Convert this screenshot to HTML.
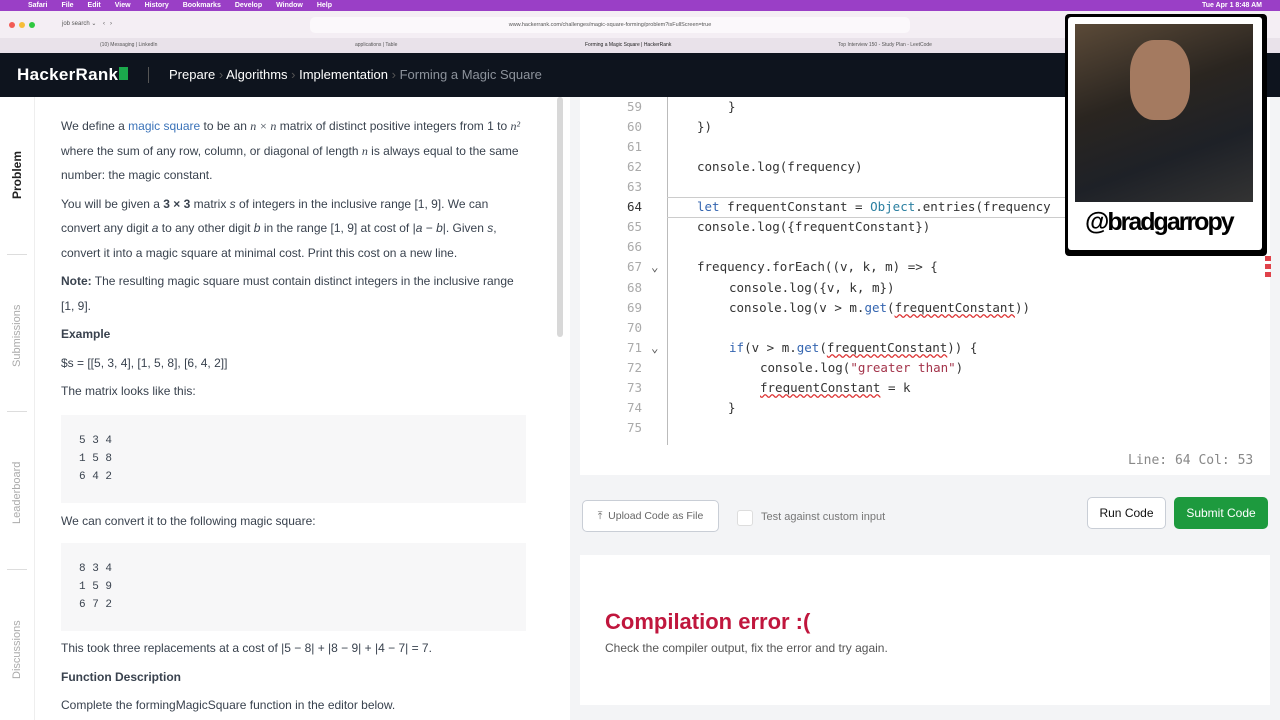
<!DOCTYPE html>
<html><head><meta charset="utf-8"><style>
*{margin:0;padding:0;box-sizing:border-box}
body{width:1280px;height:720px;overflow:hidden;font-family:"Liberation Sans",sans-serif;background:#fff;position:relative}
.abs{position:absolute}
.menu{top:0;left:0;width:1280px;height:11px;background:#9a3fc6;color:#fff;font-size:7px;font-weight:bold;line-height:11px}
.menu span{margin-left:14px}
.tool{top:11px;left:0;width:1280px;height:27px;background:#f4eef4}
.tabs{top:38px;left:0;width:1280px;height:15px;background:#e9e2ea;font-size:5px;color:#555;line-height:15px}
.hdr{top:53px;left:0;width:1280px;height:44px;background:#0e141e;color:#fff}
.side{top:97px;left:0;width:35px;height:623px;background:#fff;border-right:1px solid #eee}
.vt{position:absolute;transform:rotate(-90deg);transform-origin:left top;font-size:11px;color:#aaa;white-space:nowrap}
.content{top:97px;left:35px;width:520px;color:#39424e;font-size:12px;line-height:24.5px}
.content p{margin-left:26px;width:462px}
.pre{margin-left:26px;width:465px;background:#f7f7f8;font-family:"Liberation Mono",monospace;font-size:11px;line-height:18px;padding:17px 18px;color:#39424e}
.right{top:97px;left:570px;width:710px;height:623px;background:#f3f4f6}
.editor{top:97px;left:580px;width:690px;height:378px;background:#fff}
.code{font-family:"DejaVu Sans Mono","Liberation Mono",monospace;font-size:12.5px;color:#333}
.ln{position:absolute;left:592px;width:50px;text-align:right;color:#aaa}
.cl{position:absolute;white-space:pre}
.sq{text-decoration:underline wavy #d33;text-decoration-skip-ink:none}
.btn{border:1px solid #c9ced6;border-radius:5px;background:#fff;font-size:12px;text-align:center}
</style></head><body>
<div class="abs menu"><span style="margin-left:28px">Safari</span><span>File</span><span>Edit</span><span>View</span><span>History</span><span>Bookmarks</span><span>Develop</span><span>Window</span><span>Help</span><span style="position:absolute;right:18px">Tue Apr 1 8:48 AM</span></div>
<div class="abs tool">
 <div class="abs" style="left:9px;top:11px;width:6px;height:6px;border-radius:50%;background:#f25b55"></div>
 <div class="abs" style="left:19px;top:11px;width:6px;height:6px;border-radius:50%;background:#f6bd3a"></div>
 <div class="abs" style="left:29px;top:11px;width:6px;height:6px;border-radius:50%;background:#2fc840"></div>
 <div class="abs" style="left:62px;top:9px;font-size:6px;color:#555">job search ⌄ &nbsp;&nbsp; ‹ &nbsp; ›</div>
 <div class="abs" style="left:310px;top:6px;width:600px;height:16px;background:#fbf8fb;border-radius:5px;font-size:5.5px;color:#555;text-align:center;line-height:16px">www.hackerrank.com/challenges/magic-square-forming/problem?isFullScreen=true</div>
</div>
<div class="abs tabs"><span style="position:absolute;left:100px">(10) Messaging | LinkedIn</span><span style="position:absolute;left:355px">applications | Table</span><span style="position:absolute;left:585px;color:#222">Forming a Magic Square | HackerRank</span><span style="position:absolute;left:838px">Top Interview 150 - Study Plan - LeetCode</span></div>
<div class="abs hdr">
 <div class="abs" style="left:17px;top:12px;font-size:17px;font-weight:bold;letter-spacing:.3px">HackerRank<span style="display:inline-block;width:9px;height:13px;background:#1ba94c;margin-left:1px"></span></div>
 <div class="abs" style="left:148px;top:14px;width:1px;height:16px;background:#555"></div>
 <div class="abs" style="left:169px;top:14px;font-size:13px">Prepare <span style="color:#555">›</span> Algorithms <span style="color:#555">›</span> Implementation <span style="color:#555">›</span> <span style="color:#8c929b">Forming a Magic Square</span></div>
</div>
<div class="abs side">
 <div class="vt" style="left:10px;top:102px;color:#222;font-weight:bold;font-size:12px">Problem</div>
 <div class="vt" style="left:11px;top:270px">Submissions</div>
 <div class="vt" style="left:11px;top:427px">Leaderboard</div>
 <div class="vt" style="left:11px;top:582px">Discussions</div>
 <div class="abs" style="left:7px;top:157px;width:20px;height:1px;background:#ddd"></div>
 <div class="abs" style="left:7px;top:314px;width:20px;height:1px;background:#ddd"></div>
 <div class="abs" style="left:7px;top:472px;width:20px;height:1px;background:#ddd"></div>
</div>
<div class="abs content">
 <p style="margin-top:17px">We define a <span style="color:#3b73b9">magic square</span> to be an <i style="font-family:'Liberation Serif'">n × n</i> matrix of distinct positive integers from 1 to <i style="font-family:'Liberation Serif'">n²</i> where the sum of any row, column, or diagonal of length <i style="font-family:'Liberation Serif'">n</i> is always equal to the same number: the magic constant.</p>
 <p style="margin-top:4px">You will be given a <b>3 × 3</b> matrix <i>s</i> of integers in the inclusive range [1, 9]. We can convert any digit <i>a</i> to any other digit <i>b</i> in the range [1, 9] at cost of |<i>a</i> − <i>b</i>|. Given <i>s</i>, convert it into a magic square at minimal cost. Print this cost on a new line.</p>
 <p style="margin-top:4px"><b>Note:</b> The resulting magic square must contain distinct integers in the inclusive range [1, 9].</p>
 <p style="margin-top:4px"><b>Example</b></p>
 <p style="margin-top:4px">$s = [[5, 3, 4], [1, 5, 8], [6, 4, 2]]</p>
 <p style="margin-top:4px">The matrix looks like this:</p>
 <div class="pre" style="margin-top:11px">5 3 4<br>1 5 8<br>6 4 2</div>
 <p style="margin-top:6px">We can convert it to the following magic square:</p>
 <div class="pre" style="margin-top:10px">8 3 4<br>1 5 9<br>6 7 2</div>
 <p style="margin-top:5px">This took three replacements at a cost of |5 − 8| + |8 − 9| + |4 − 7| = 7.</p>
 <p style="margin-top:4px"><b>Function Description</b></p>
 <p style="margin-top:4px">Complete the formingMagicSquare function in the editor below.</p>
</div>
<div class="abs" style="left:557px;top:97px;width:6px;height:240px;background:#d8d8d8;border-radius:3px"></div>
<div class="abs right"></div>
<div class="abs editor"></div>
<div class="abs" style="left:667px;top:97px;width:1px;height:348px;background:#bbb"></div>
<div class="abs" style="left:667px;top:197px;width:401px;height:21px;border-top:1px solid #ccc;border-bottom:1px solid #ccc"></div>
<div class="code">
 <div class="ln" style="top:99px">59</div><div class="ln" style="top:119px">60</div><div class="ln" style="top:139px">61</div><div class="ln" style="top:159px">62</div><div class="ln" style="top:179px">63</div><div class="ln" style="top:199px;color:#333">64</div><div class="ln" style="top:219px">65</div><div class="ln" style="top:239px">66</div><div class="ln" style="top:259px">67</div><div class="ln" style="top:280px">68</div><div class="ln" style="top:300px">69</div><div class="ln" style="top:320px">70</div><div class="ln" style="top:340px">71</div><div class="ln" style="top:360px">72</div><div class="ln" style="top:380px">73</div><div class="ln" style="top:400px">74</div><div class="ln" style="top:420px">75</div>
 <div class="cl" style="left:651px;top:259px;color:#555">⌄</div><div class="cl" style="left:651px;top:340px;color:#555">⌄</div>
 <div class="cl" style="left:728px;top:99px">}</div>
 <div class="cl" style="left:697px;top:119px">})</div>
 <div class="cl" style="left:697px;top:159px">console.log(frequency)</div>
 <div class="cl" style="left:697px;top:199px"><span style="color:#3465b0">let</span> frequentConstant = <span style="color:#2a7fa0">Object</span>.entries(frequency</div>
 <div class="cl" style="left:697px;top:219px">console.log({frequentConstant})</div>
 <div class="cl" style="left:697px;top:259px">frequency.forEach((v, k, m) =&gt; {</div>
 <div class="cl" style="left:729px;top:280px">console.log({v, k, m})</div>
 <div class="cl" style="left:729px;top:300px">console.log(v &gt; m.<span style="color:#3465b0">get</span>(<span class="sq">frequentConstant</span>))</div>
 <div class="cl" style="left:729px;top:340px"><span style="color:#3465b0">if</span>(v &gt; m.<span style="color:#3465b0">get</span>(<span class="sq">frequentConstant</span>)) {</div>
 <div class="cl" style="left:760px;top:360px">console.log(<span style="color:#a3334a">"greater than"</span>)</div>
 <div class="cl" style="left:760px;top:380px"><span class="sq">frequentConstant</span> = k</div>
 <div class="cl" style="left:728px;top:400px">}</div>
 <div class="cl" style="left:1128px;top:453px;color:#888;font-size:13px">Line: 64 Col: 53</div>
</div>
<div class="abs btn" style="left:582px;top:500px;width:137px;height:32px;line-height:31px;font-size:10.5px;color:#666">⤒ &nbsp;Upload Code as File</div>
<div class="abs" style="left:737px;top:510px;width:16px;height:16px;border:1px solid #ddd;border-radius:3px;background:#fff"></div>
<div class="abs" style="left:761px;top:511px;font-size:11px;color:#777">Test against custom input</div>
<div class="abs btn" style="left:1087px;top:497px;width:79px;height:32px;line-height:31px;color:#111">Run Code</div>
<div class="abs" style="left:1174px;top:497px;width:94px;height:32px;line-height:32px;background:#1d9a3e;color:#fff;border-radius:5px;font-size:12px;text-align:center">Submit Code</div>
<div class="abs" style="left:580px;top:555px;width:690px;height:150px;background:#fff"></div>
<div class="abs" style="left:605px;top:609px;font-size:22px;font-weight:bold;color:#c0163d">Compilation error :(</div>
<div class="abs" style="left:605px;top:641px;font-size:12px;color:#555">Check the compiler output, fix the error and try again.</div>
<div class="abs" style="left:1265px;top:256px;width:6px;height:22px;background:repeating-linear-gradient(#e0424a 0 5px,transparent 5px 8px)"></div>
<div class="abs" style="left:1065px;top:14px;width:202px;height:242px;background:#000;border-radius:4px"></div>
<div class="abs" style="left:1068px;top:17px;width:194px;height:233px;background:#fff;border-radius:3px"></div>
<div class="abs" style="left:1075px;top:24px;width:178px;height:178px;background:linear-gradient(160deg,#5b4a38,#2a2520 40%,#1e2127 70%,#333 100%)"></div>
<div class="abs" style="left:1130px;top:40px;width:60px;height:80px;border-radius:40%;background:#a47a60"></div>
<div class="abs" style="left:1085px;top:208px;font-size:25px;font-weight:bold;letter-spacing:-2px;color:#000">@bradgarropy</div>
</body></html>
